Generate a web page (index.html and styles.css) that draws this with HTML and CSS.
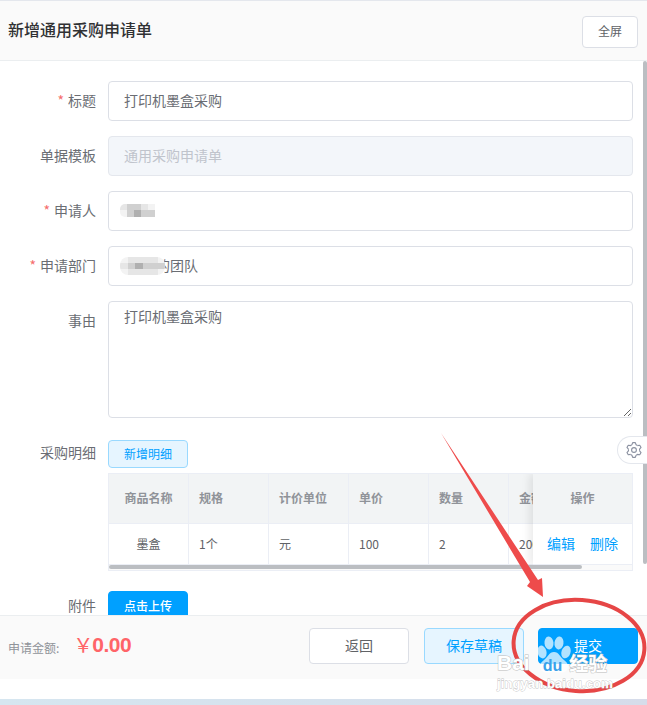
FILE: index.html
```html
<!DOCTYPE html>
<html lang="zh">
<head>
<meta charset="utf-8">
<title>新增通用采购申请单</title>
<link rel="stylesheet" href="styles.css">
</head>
<body>
<div class="page">
  <header class="head">
    <h1 class="title">新增通用采购申请单</h1>
    <button class="btn btn-full">全屏</button>
  </header>
  <main class="form">
    <div class="row">
      <label class="label"><i>*</i>标题</label>
      <div class="field">打印机墨盒采购</div>
    </div>
    <div class="row">
      <label class="label">单据模板</label>
      <div class="field disabled">通用采购申请单</div>
    </div>
    <div class="row">
      <label class="label"><i>*</i>申请人</label>
      <div class="field"><span class="mosaic small"><b class="m1"></b><b class="m2"></b><b class="m2"></b><b class="m1"></b><b class="m0"></b><b class="m0"></b><b class="m2"></b><b class="m3"></b><b class="m2"></b><b class="m2"></b></span></div>
    </div>
    <div class="row">
      <label class="label"><i>*</i>申请部门</label>
      <div class="field"><span class="mosaic wide"><b class="m0"></b><b class="m1"></b><b class="m1"></b><b class="m1"></b><b class="m1"></b><b class="m0"></b><b class="m1"></b><b class="m2"></b><b class="m3"></b><b class="m2"></b><b class="m2"></b><b class="m2"></b><b class="m0"></b><b class="m1"></b><b class="m1"></b><b class="m1"></b><b class="m1"></b><b class="m0"></b></span><span class="tail">的团队</span></div>
    </div>
    <div class="row row-area">
      <label class="label">事由</label>
      <textarea class="area">打印机墨盒采购</textarea>
    </div>
    <div class="row row-detail">
      <label class="label">采购明细</label>
      <div class="detail">
        <button class="btn btn-add">新增明细</button>
        <div class="table">
          <div class="cells">
            <div class="cell th center">商品名称</div>
            <div class="cell th">规格</div>
            <div class="cell th">计价单位</div>
            <div class="cell th">单价</div>
            <div class="cell th">数量</div>
            <div class="cell th">金额</div>
            <div class="cell center">墨盒</div>
            <div class="cell">1个</div>
            <div class="cell">元</div>
            <div class="cell">100</div>
            <div class="cell">2</div>
            <div class="cell">200</div>
          </div>
          <div class="fixed">
            <div class="cell th center">操作</div>
            <div class="cell ops"><a>编辑</a><a>删除</a></div>
          </div>
          <div class="hbar"><div class="thumb"></div></div>
        </div>
      </div>
    </div>
    <div class="row row-file">
      <label class="label">附件</label>
      <button class="btn btn-upload">点击上传</button>
    </div>
  </main>
  <footer class="foot">
    <span class="amt-label">申请金额:</span>
    <span class="yen">￥</span><span class="amt">0.00</span>
    <div class="actions">
      <button class="btn btn-back">返回</button>
      <button class="btn btn-draft">保存草稿</button>
      <button class="btn btn-submit">提交</button>
    </div>
  </footer>
  <div class="spacer"></div>
  <div class="backdrop"></div>

  <div class="vbar"></div>
  <div class="gear">
    <svg width="16" height="16" viewBox="0 0 16 16" fill="none" stroke="#8a90a0" stroke-width="1.100" stroke-linejoin="round">
      <defs><path id="tooth" d="M5.900 2.810L6.700 .61H9.300L10.100 2.810L11.450 3.590"/></defs>
      <use href="#tooth"/>
      <use href="#tooth" transform="rotate(60 8 8)"/>
      <use href="#tooth" transform="rotate(120 8 8)"/>
      <use href="#tooth" transform="rotate(180 8 8)"/>
      <use href="#tooth" transform="rotate(240 8 8)"/>
      <use href="#tooth" transform="rotate(300 8 8)"/>
      <circle cx="8" cy="8" r="2.400"/>
    </svg>
  </div>

  <svg class="marks" width="647" height="705" viewBox="0 0 647 705">
    <path d="M441 433L530 582L527 586L543 597L542 578L538 580Z" fill="#ee4b4b"/>
    <ellipse cx="579" cy="645.500" rx="65.500" ry="45.500" fill="none" stroke="#e64646" stroke-width="4" transform="rotate(4 579 645.500)"/>
    <g fill="#fff" fill-opacity=".7">
      <ellipse cx="542" cy="652" rx="4.500" ry="6.500" transform="rotate(-15 542 652)"/>
      <ellipse cx="549" cy="643" rx="4.500" ry="6.500" transform="rotate(-5 549 643)"/>
      <ellipse cx="559" cy="643" rx="4.500" ry="6.500" transform="rotate(8 559 643)"/>
      <ellipse cx="566" cy="652" rx="4.500" ry="6.500" transform="rotate(18 566 652)"/>
      <path d="M554 652c-5 0-6 5-10 8-4 3-5 6-3 10 2 3 6 3 13 2 7 1 11 1 13-2 2-4 1-7-3-10-4-3-5-8-10-8z"/>
    </g>
  </svg>
  <div class="wm">
    <div class="wm-line"><span class="wm-b">Bai</span><span class="wm-du">du</span><span class="wm-j">经验</span></div>
    <div class="wm-url">jingyan.baidu.com</div>
  </div>
</div>
</body>
</html>
```
FILE: styles.css
```css
* { box-sizing: border-box; }
html, body { margin: 0; padding: 0; }
body { background: #fff; font-family: "Noto Sans CJK SC", "Liberation Sans", sans-serif; font-size: 14px; color: #606266; }
.page { position: relative; width: 647px; height: 705px; overflow: hidden; display: flex; flex-direction: column; border-top: 1px solid #e4e7ed; }
.head { height: 60px; flex: none; display: flex; align-items: center; justify-content: space-between; padding: 0 9px 0 8px; background: #fafafa; border-bottom: 1px solid #ebeef0; }
.title { margin: 0; font-size: 16px; font-weight: 500; color: #303133; line-height: 22px; position: relative; top: -2px; }
.btn { font-family: inherit; font-size: 13px; border: 1px solid #dcdfe6; border-radius: 4px; background: #fff; color: #606266; padding: 0 0 2px; cursor: pointer; }
.btn-full { width: 56px; height: 32px; font-size: 12px; position: relative; top: 1px; }
.form { height: 554px; flex: none; overflow: hidden; padding: 20px 14px 0 0; }
.row { display: flex; gap: 12px; margin-bottom: 15px; }
.label { width: 96px; flex: none; text-align: right; line-height: 38px; color: #6a6d73; }
.label i { color: #f56c6c; font-style: normal; margin-right: 4px; }
.field { flex: 1; height: 40px; border: 1px solid #dcdfe6; border-radius: 4px; padding: 0 15px 2px; color: #6a6d73; display: flex; align-items: center; background: #fff; }
.field.disabled { background: #f3f6fa; border-color: #e4e7ed; color: #c0c4cc; }
.mosaic { display: grid; margin-left: -4px; flex: none; position: relative; z-index: 1; filter: blur(.6px); }
.mosaic b { display: block; }
.small { grid-template-columns: repeat(5, 7px); grid-auto-rows: 6.500px; border-radius: 5px 0 0 5px; overflow: hidden; }
.wide { grid-template-columns: repeat(6, 7.500px); grid-auto-rows: 6px; border-radius: 8px; overflow: hidden; margin-top: 2px; }
.m0 { background: #f3f3f3; }
.m1 { background: #e6e6e6; }
.m2 { background: #d0d0d0; }
.m3 { background: #b0b0b0; }
.tail { margin-left: -9px; }
.area { flex: 1; height: 117px; border: 1px solid #dcdfe6; border-radius: 4px; padding: 4px 15px; font: 14px/21px "Noto Sans CJK SC", "Liberation Sans", sans-serif; color: #6a6d73; outline: none; resize: vertical; background: #fff; display: block; }
.row-area { margin-bottom: 22px; }
.row-detail { margin-bottom: 20px; }
.row-detail .label { line-height: 24px; }
.detail { flex: 1; min-width: 0; }
.btn-add { display: block; width: 80px; height: 28px; font-size: 12px; background: #e6f5ff; border-color: #99d9ff; color: #00a0ff; }
.table { position: relative; margin-top: 5px; height: 98px; border: 1px solid #ebeef5; overflow: hidden; }
.cells { display: grid; grid-template-columns: repeat(6, 80px); grid-template-rows: 50px 41px; }
.cell { padding: 0 10px 2px; display: flex; align-items: center; font-size: 12px; color: #606266; border-right: 1px solid #ebeef5; border-bottom: 1px solid #ebeef5; }
.th { background: #f2f4f5; color: #909399; font-size: 12px; font-weight: 700; }
.center { justify-content: center; }
.fixed { position: absolute; right: 0; top: 0; width: 99px; display: grid; grid-template-rows: 50px 41px; background: #fff; box-shadow: -4px 0 8px rgba(0,0,0,.08); }
.fixed .cell { border-right: 0; }
.ops { gap: 15px; justify-content: center; padding: 0 0 2px; }
.ops a { color: #00a0ff; font-size: 14px; }
.hbar { position: absolute; left: 0; right: 0; bottom: 0; height: 5px; background: #fafafa; }
.thumb { width: 473px; height: 4px; background: #bbbec2; border-radius: 2px; }
.row-file .label { line-height: 28px; }
.btn-upload { width: 80px; height: 36px; font-size: 12px; background: #00a0ff; border-color: #00a0ff; color: #fff; font-weight: 500; padding: 0 0 7px; }
.foot { height: 64px; flex: none; display: flex; align-items: flex-start; background: #fafafa; border-top: 1px solid #ebeef0; padding: 12px 9px 0 8px; }
.amt-label { font-size: 12px; color: #909399; margin-right: 15px; line-height: 18px; margin-top: 11px; }
.yen { font-size: 20px; color: #ff6468; width: 17px; line-height: 26px; margin-top: 4px; margin-left: -1px; }
.amt { font: 700 21px/26px "Liberation Sans", sans-serif; letter-spacing: -.5px; color: #ff6468; margin-left: 2px; margin-top: 4px; }
.actions { margin-left: auto; display: flex; gap: 14px; }
.actions .btn { width: 100px; height: 36px; font-size: 14px; }
.actions .btn-back { margin-right: 1px; }
.btn-draft { background: #e6f5ff !important; border-color: #99d9ff !important; color: #00a0ff !important; }
.btn-submit { background: #00a0ff !important; border-color: #00a0ff !important; color: #fff !important; }
.spacer { height: 20px; flex: none; background: #fff; }
.backdrop { flex: 1; background: linear-gradient(90deg, #d6e6f0, #d6dcea); }
.vbar { position: absolute; right: 0; top: 60px; width: 4px; height: 503px; background: #bbbec2; border-radius: 2px; }
.gear { position: absolute; left: 617px; top: 435px; width: 30px; height: 28px; border: 1px solid #e4e7ed; border-right: 0; border-radius: 14px 0 0 14px; background: #fff; display: flex; align-items: center; padding-left: 8px; }
.marks { position: absolute; left: 0; top: -1px; pointer-events: none; }
.wm { position: absolute; left: 497px; top: 650px; width: 150px; color: #fff; }
.wm-line { display: flex; align-items: center; font-family: "Liberation Sans", sans-serif; font-weight: 700; font-size: 21px; line-height: 24px; height: 24px; }
.wm-b { color: #fff; -webkit-text-stroke: 1px #bcbcbc; paint-order: stroke fill; }
.wm-du { color: #3aa2ea; margin-left: 13px; font-size: 16px; position: relative; top: 3px; }
.wm-j { font-family: "Noto Sans CJK SC", sans-serif; font-size: 19px; margin-left: 7px; color: #fff; -webkit-text-stroke: 1px #bcbcbc; paint-order: stroke fill; }
.wm-url { font: 700 13px/14px "Liberation Sans", sans-serif; color: #fff; -webkit-text-stroke: .8px #c4c4c4; paint-order: stroke fill; letter-spacing: .1px; margin-top: 2px; }
```
